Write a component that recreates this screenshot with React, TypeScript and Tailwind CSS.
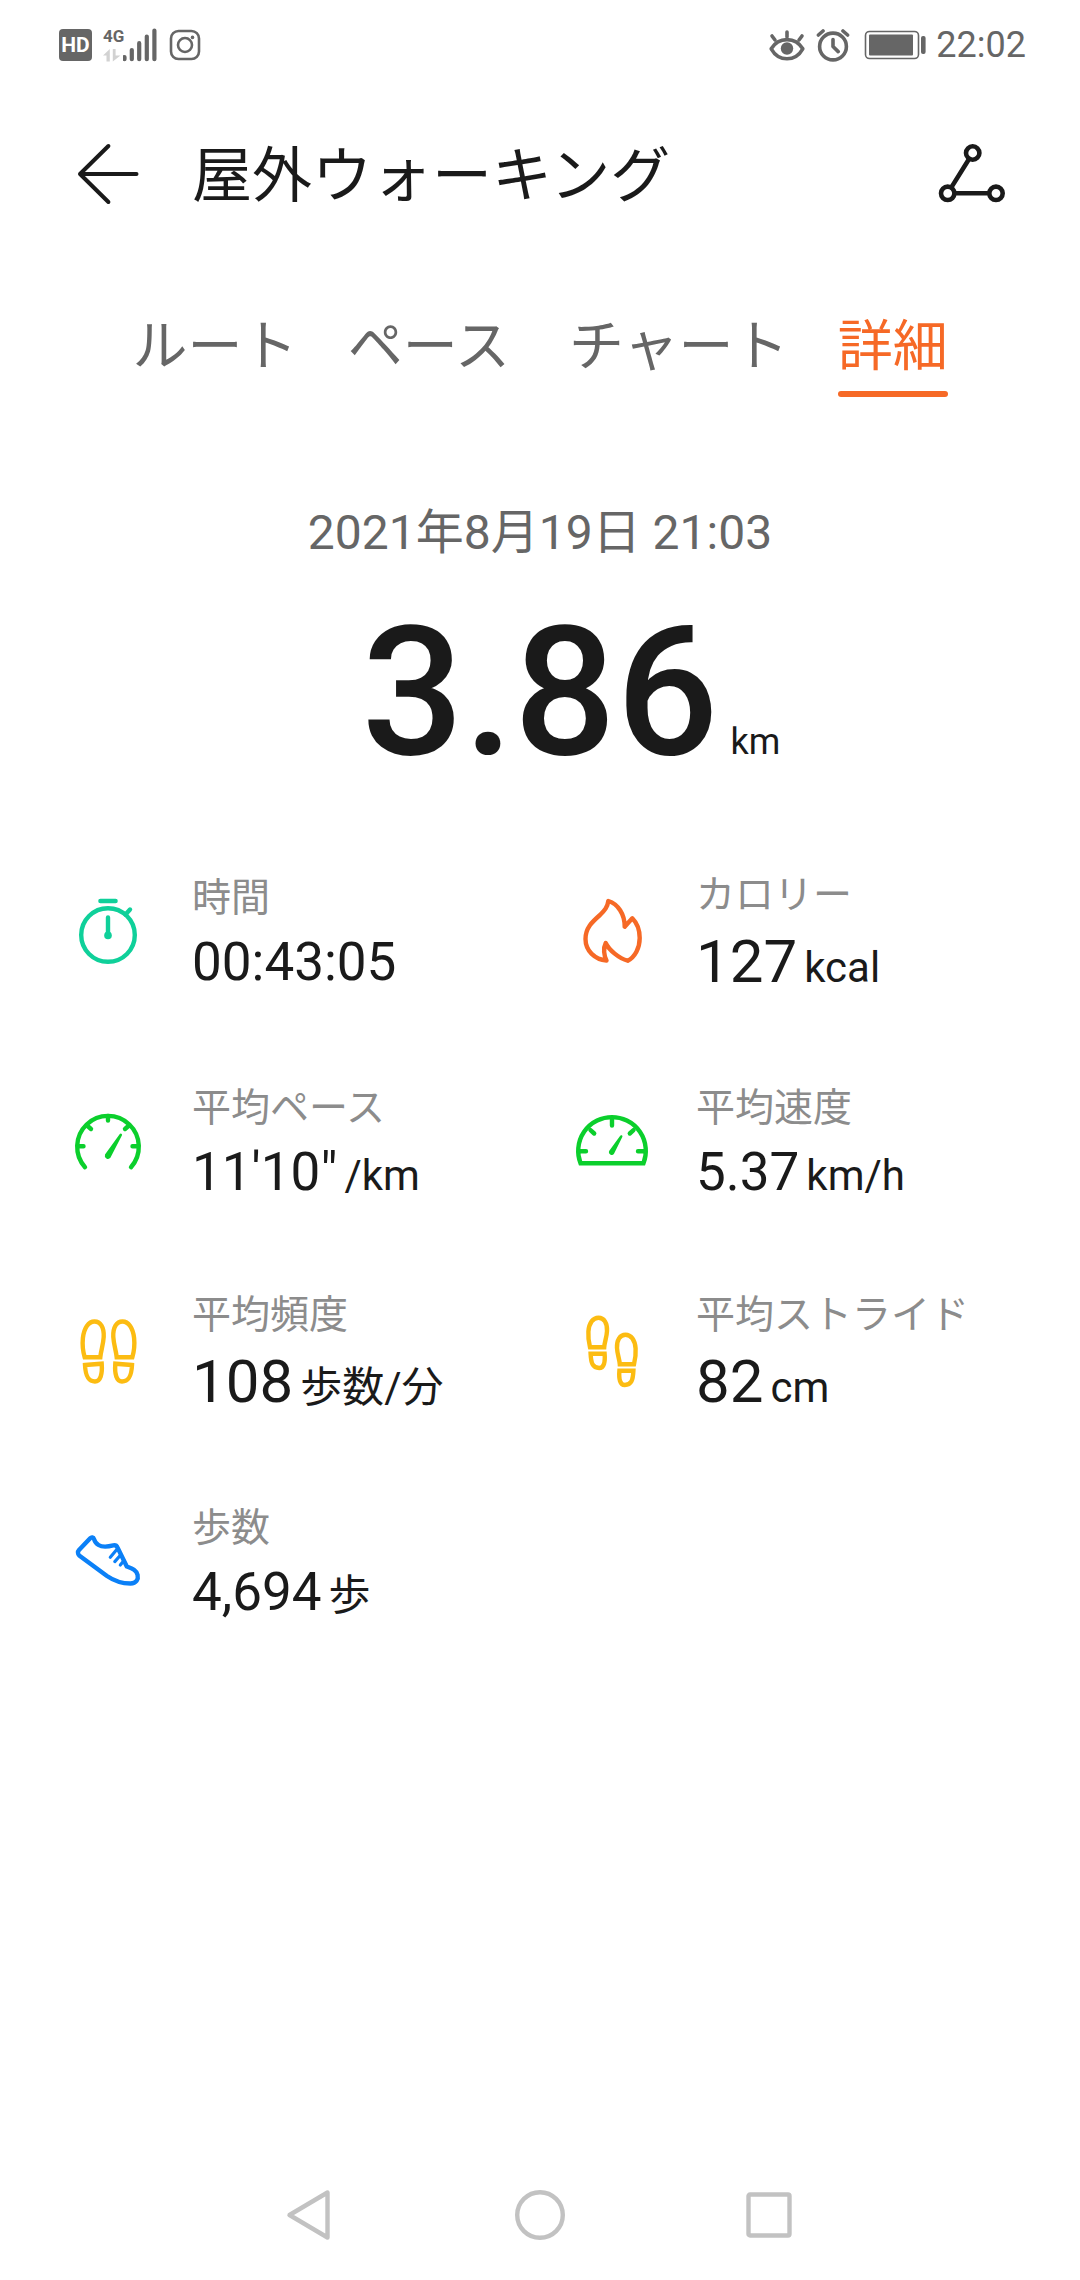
import type { ReactNode } from "react";

type IconProps = { children: ReactNode; className?: string };

function MetricIcon({ children, className = "" }: IconProps) {
  return (
    <svg
      viewBox="0 0 72 72"
      className={`size-[72px] shrink-0 overflow-visible ${className}`}
      fill="none"
      stroke="currentColor"
      strokeWidth="4.4"
      strokeLinecap="round"
      strokeLinejoin="round"
      aria-hidden="true"
    >
      {children}
    </svg>
  );
}

function StopwatchIcon() {
  return (
    <MetricIcon className="text-[#0fd09a]">
      <circle cx="36" cy="38" r="26.8" />
      <path d="M28.4 4H43.6M53.5 17.5L58 12.5M36 20.5V38" />
      <circle cx="36" cy="38.4" r="3.8" fill="currentColor" stroke="none" />
    </MetricIcon>
  );
}

function FlameIcon() {
  return (
    <MetricIcon className="text-[#f66926]">
      <path d="M32.3 4C31.5 10 29 13 24 18C16 25 9.5 31 9.5 42C9.5 54 19 62.5 30.5 63.5C28 59 27 51 29.7 46C33 53 43 61.5 51.7 63.7C59 60 63.7 51 63.7 41C63.7 34 61 26 56.3 21.3L48.7 29.7C48.7 17 42 7 32.3 4Z" />
    </MetricIcon>
  );
}

function PaceGaugeIcon() {
  return (
    <MetricIcon className="text-[#0bcf2c]">
      <path d="M13 60.2A30.8 30.8 0 1 1 59 60.2" />
      <path d="M6 39.3H11.5M66 39.3H60.5M36 9V13.5M15 18.5L19 22M57 18.5L53 22" />
      <path
        d="M47.8 27L33 47.6A3.2 3.2 0 0 0 38.4 50.8L50 28.2A1.3 1.3 0 0 0 47.8 27Z"
        fill="currentColor"
        stroke="none"
      />
    </MetricIcon>
  );
}

function SpeedGaugeIcon() {
  return (
    <MetricIcon className="text-[#0bcf2c]">
      <path d="M4.5 56.2A33.8 33.8 0 1 1 67.5 56.2Z" strokeLinejoin="miter" />
      <path d="M3.5 44.2H10M68.5 44.2H62M36 12V18.5M14.5 23.2L18.2 26.5M57.5 23.2L53.8 26.5" />
      <path
        d="M44.2 28.8L33.3 43.8A2.8 2.8 0 0 0 38 46.8L46.3 30A1.2 1.2 0 0 0 44.2 28.8Z"
        fill="currentColor"
        stroke="none"
      />
    </MetricIcon>
  );
}

const WIDE_SOLE =
  "M12.7 40.3C10.5 33 10.3 27 10.9 21C12 11 16.5 4.5 22.5 4.5C28.5 4.5 32.2 10.5 31.7 20C31.2 28 29 33 28.3 40.3ZM13 48L29.7 46.7C30.5 57 28.5 64.5 23 64.5C16 64.5 13.5 59 13 48Z";
const NARROW_SOLE =
  "M14 30.3C12.4 24 12.1 19 12.4 14.5C13 6 17 .7 22.5 .7C28 .7 31.4 6 31 14C30.7 20.5 28.6 24.5 28.2 30.3ZM14.6 36.7H28.6C29.3 45 28 51 23.2 51C16.5 51 15 46 14.6 36.7Z";

function StepsIcon() {
  return (
    <MetricIcon className="text-[#fcbc12]">
      <path d={WIDE_SOLE} strokeLinejoin="miter" />
      <path d={WIDE_SOLE} strokeLinejoin="miter" transform="translate(73 0) scale(-1 1)" />
    </MetricIcon>
  );
}

function StrideIcon() {
  return (
    <MetricIcon className="text-[#fcbc12]">
      <path d={NARROW_SOLE} strokeLinejoin="miter" />
      <path d={NARROW_SOLE} strokeLinejoin="miter" transform="translate(72 17) scale(-1 1)" />
    </MetricIcon>
  );
}

function ShoeIcon() {
  return (
    <MetricIcon className="text-[#0b80f7]">
      <path d="M22 12C21.5 10.3 19.5 9.8 18.2 11.2L7 23C5.6 24.6 5.6 27 7.2 28.5L35 49C43 54.5 50 56.5 58.5 56.5C64.5 56.5 66.5 52 65.6 48C64.5 43 60 41.5 54.8 39.5L45.5 20.5C44.5 18.3 43.5 18 41.3 18.4C35 20 30 20.2 26.5 18C24 16.5 22.8 14.8 22 12Z" />
      <path d="M44.8 22.5L38.3 30.2M48.6 28L42.8 34.6M52 33.5L48.3 38" strokeWidth="3.2" />
    </MetricIcon>
  );
}

function StatusBar() {
  return (
    <div className="flex h-[90px] items-center justify-between pr-[54px] pl-[59px] text-[#666]">
      <div className="flex items-center">
        <span className="flex h-8 w-[33px] items-center justify-center rounded bg-[#666] text-[21px] leading-none font-bold text-white">
          HD
        </span>
        <span className="ml-[11px] flex h-[34px] w-5 flex-col justify-between">
          <span className="text-[17px] leading-4 font-bold">4G</span>
          <svg viewBox="0 0 18 13" className="h-[13px] w-[18px] overflow-visible fill-[#d2d2d2]" aria-hidden="true">
            <path d="M0 6.5L6.8 0V12.5H3.5V6.5ZM9.8 0H12.6V6.5H17.5L9.8 12.5Z" />
          </svg>
        </span>
        <svg
          viewBox="0 0 36 34"
          className="h-[34px] w-9"
          stroke="currentColor"
          strokeWidth="4.2"
          strokeLinecap="round"
          aria-hidden="true"
        >
          <path d="M1.5 29V31.2M8.8 22V31.2M16.2 15.2V31.2M23.8 8.5V31.2M31.4 2.5V31.2" />
        </svg>
        <svg
          viewBox="0 0 32 32"
          className="ml-2.5 size-8"
          fill="none"
          stroke="currentColor"
          strokeWidth="2.6"
          aria-hidden="true"
        >
          <rect x="2" y="2" width="28" height="28" rx="7.5" />
          <circle cx="16" cy="16" r="7" />
          <circle cx="23.5" cy="8.4" r="1.8" fill="currentColor" stroke="none" />
        </svg>
      </div>
      <div className="flex items-center">
        <svg
          viewBox="0 0 38 34"
          className="h-[34px] w-[38px]"
          fill="none"
          stroke="currentColor"
          strokeWidth="3.6"
          strokeLinecap="round"
          strokeLinejoin="round"
          aria-hidden="true"
        >
          <path d="M3.2 20.8C7 14.5 12.5 11.6 19 11.6S31 14.5 34.8 20.8C31 27.5 25.5 30.8 19 30.8S7 27.5 3.2 20.8Z" />
          <path d="M19 4V9M4 8L7 12M34 8L31 12" />
          <circle cx="19" cy="20.5" r="6.2" fill="currentColor" stroke="none" />
        </svg>
        <svg
          viewBox="0 0 34 34"
          className="ml-2.5 size-[34px]"
          fill="none"
          stroke="currentColor"
          strokeWidth="3.6"
          strokeLinecap="round"
          strokeLinejoin="round"
          aria-hidden="true"
        >
          <circle cx="17" cy="18.5" r="13.4" />
          <path d="M2.4 7L7 3M31.6 7L27 3M17 11.5V18.5L22.2 23.6" />
        </svg>
        <svg viewBox="0 0 62 30" className="ml-[14px] h-[30px] w-[62px]" fill="currentColor" aria-hidden="true">
          <rect x="1.5" y="1.5" width="53" height="27" rx="4" fill="none" stroke="currentColor" strokeWidth="1.6" />
          <rect x="5" y="4.5" width="44" height="21" rx="1" />
          <rect x="57" y="6" width="4.6" height="18" rx="2" />
        </svg>
        <time className="ml-2.5 text-[36px] leading-[42px]">22:02</time>
      </div>
    </div>
  );
}

function Header() {
  return (
    <header className="flex h-[168px] items-center px-[72px]">
      <button type="button" aria-label="戻る" className="shrink-0">
        <svg
          viewBox="0 0 72 72"
          className="size-[72px]"
          fill="none"
          stroke="currentColor"
          strokeWidth="4"
          strokeLinecap="round"
          strokeLinejoin="round"
        >
          <path d="M36.4 8L8 36L36.4 64M8 36H64.5" />
        </svg>
      </button>
      <h1 className="ml-12 flex-1 pt-1.5 text-[60px] leading-[80px]">屋外ウォーキング</h1>
      <button type="button" aria-label="共有" className="shrink-0">
        <svg viewBox="0 0 72 72" className="size-[72px]" fill="none" stroke="currentColor" strokeWidth="4.6">
          <circle cx="36.7" cy="15" r="6.7" />
          <circle cx="11.7" cy="55.3" r="6.7" />
          <circle cx="60" cy="55.3" r="6.7" />
          <path d="M33.2 20.7L15.2 49.6M18.4 55.3H53.3" />
        </svg>
      </button>
    </header>
  );
}

const TABS = ["ルート", "ペース", "チャート", "詳細"];

function Tabs() {
  return (
    <div
      role="tablist"
      className="mt-[46px] grid grid-cols-[3fr_3fr_4fr_2fr] justify-items-center pr-[116px] pl-[108px] text-[55px] leading-[84px]"
    >
      {TABS.map((tab) => {
        const selected = tab === "詳細";
        return (
          <button
            key={tab}
            type="button"
            role="tab"
            aria-selected={selected}
            className={`whitespace-nowrap ${selected ? "text-[#f66926]" : "text-[#666]"}`}
          >
            {tab}
            <span className={`mt-[3px] block h-1.5 rounded-full ${selected ? "bg-[#f66926]" : "bg-transparent"}`} />
          </button>
        );
      })}
    </div>
  );
}

type Metric = { label: string; value: string; unit?: string; large?: boolean; icon: ReactNode };

const METRICS: Metric[] = [
  { label: "時間", value: "00:43:05", icon: <StopwatchIcon /> },
  { label: "カロリー", value: "127", unit: "kcal", large: true, icon: <FlameIcon /> },
  { label: "平均ペース", value: "11'10\"", unit: "/km", icon: <PaceGaugeIcon /> },
  { label: "平均速度", value: "5.37", unit: "km/h", icon: <SpeedGaugeIcon /> },
  { label: "平均頻度", value: "108", unit: "歩数/分", large: true, icon: <StepsIcon /> },
  { label: "平均ストライド", value: "82", unit: "cm", large: true, icon: <StrideIcon /> },
  { label: "歩数", value: "4,694", unit: "歩", icon: <ShoeIcon /> },
];

function MetricCell({ label, value, unit, large, icon }: Metric) {
  return (
    <div className="flex h-[210px] items-center gap-12 pl-9">
      {icon}
      <dl>
        <dt className="text-[39px] leading-[52px] text-[#8c8c8c]">{label}</dt>
        <dd className="mt-1.5 flex items-baseline gap-[7px] whitespace-nowrap">
          <span className={large ? "text-[60px] leading-[70px]" : "text-[53px] leading-[64px]"}>{value}</span>
          {unit && <span className="text-[42px] leading-none">{unit}</span>}
        </dd>
      </dl>
    </div>
  );
}

function NavBar() {
  return (
    <nav className="mt-auto flex h-[130px] items-center justify-center gap-[178px] text-[#c2c2c2]">
      <button type="button" aria-label="戻る">
        <svg viewBox="0 0 52 52" className="size-[52px]" fill="none" stroke="currentColor" strokeWidth="4.4" strokeLinejoin="round">
          <path d="M5.5 26L43.5 3.5V48.5Z" />
        </svg>
      </button>
      <button type="button" aria-label="ホーム">
        <svg viewBox="0 0 52 52" className="size-[52px]" fill="none" stroke="currentColor" strokeWidth="4.4">
          <circle cx="26" cy="26" r="22.8" />
        </svg>
      </button>
      <button type="button" aria-label="履歴">
        <svg viewBox="0 0 52 52" className="size-[52px]" fill="none" stroke="currentColor" strokeWidth="4.4">
          <rect x="4.5" y="5.5" width="41" height="41" rx="1.5" />
        </svg>
      </button>
    </nav>
  );
}

export default function App() {
  return (
    <div lang="ja" className="flex min-h-screen flex-col bg-white font-['Roboto','Noto_Sans_CJK_JP',sans-serif] text-[#1a1a1a]">
      <StatusBar />
      <Header />
      <Tabs />
      <main>
        <p className="mt-[108px] text-center text-[48px] leading-[56px] text-[#666]">2021年8月19日 21:03</p>
        <p className="mt-[42px] grid grid-cols-[1fr_auto_1fr] items-baseline">
          <span className="col-start-2 text-[180px] leading-[180px] font-medium">3.86</span>
          <span className="ml-3 text-[36px] leading-none">km</span>
        </p>
        <div className="mt-[45px] grid grid-cols-2 px-9">
          {METRICS.map((metric) => (
            <MetricCell key={metric.label} {...metric} />
          ))}
        </div>
      </main>
      <NavBar />
    </div>
  );
}
